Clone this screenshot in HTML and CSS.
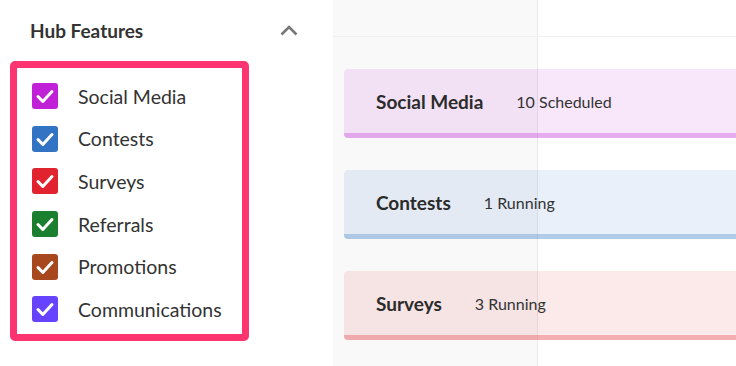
FILE: index.html
```html
<!DOCTYPE html>
<html lang="en">

<head>
    <meta charset="UTF-8">
    <meta name="viewport" content="width=device-width, initial-scale=1.0">
    <title>Hub Features</title>
    <link rel="stylesheet" href="styles.css">
</head>

<body>
    <aside class="sidebar">
        <div class="sidebar-head">
            <h2>Hub Features</h2>
            <svg class="chevron" width="18" height="11" viewBox="0 0 18 11">
                <polyline points="1.5,9.5 9,2 16.5,9.5" fill="none" stroke="#777" stroke-width="2.6" />
            </svg>
        </div>
        <div class="filter-box">
            <label class="filter-row">
                <span class="check social"><svg width="26" height="26" viewBox="0 0 26 26"><polyline points="6,13.5 10.8,18.5 20,8.5" /></svg></span>
                Social Media
            </label>
            <label class="filter-row">
                <span class="check contests"><svg width="26" height="26" viewBox="0 0 26 26"><polyline points="6,13.5 10.8,18.5 20,8.5" /></svg></span>
                Contests
            </label>
            <label class="filter-row">
                <span class="check surveys"><svg width="26" height="26" viewBox="0 0 26 26"><polyline points="6,13.5 10.8,18.5 20,8.5" /></svg></span>
                Surveys
            </label>
            <label class="filter-row">
                <span class="check referrals"><svg width="26" height="26" viewBox="0 0 26 26"><polyline points="6,13.5 10.8,18.5 20,8.5" /></svg></span>
                Referrals
            </label>
            <label class="filter-row">
                <span class="check promotions"><svg width="26" height="26" viewBox="0 0 26 26"><polyline points="6,13.5 10.8,18.5 20,8.5" /></svg></span>
                Promotions
            </label>
            <label class="filter-row">
                <span class="check communications"><svg width="26" height="26" viewBox="0 0 26 26"><polyline points="6,13.5 10.8,18.5 20,8.5" /></svg></span>
                Communications
            </label>
        </div>
    </aside>

    <main class="board">
        <div class="board-col"></div>
        <div class="board-head"></div>
        <div class="feature-list">
            <div class="feature-card social">
                <span class="feature-name">Social Media</span>
                <span class="feature-meta">10 Scheduled</span>
            </div>
            <div class="feature-card contests">
                <span class="feature-name">Contests</span>
                <span class="feature-meta">1 Running</span>
            </div>
            <div class="feature-card surveys">
                <span class="feature-name">Surveys</span>
                <span class="feature-meta">3 Running</span>
            </div>
        </div>
    </main>
</body>

</html>
```

FILE: styles.css
```css
body {
    margin: 0;
    display: flex;
    height: 366px;
    overflow: hidden;
    font-family: "Lato", "Noto Sans", sans-serif;
    color: #333;
    background-color: #fff;
}

.sidebar {
    width: 333px;
    flex-shrink: 0;
    background-color: #fff;
}

.sidebar-head {
    height: 60px;
    display: flex;
    align-items: center;
    justify-content: space-between;
    padding: 0 35px 0 30px;
    box-sizing: border-box;
}

.sidebar-head h2 {
    margin: 0;
    font-size: 19px;
    font-weight: 700;
    color: #333;
}

.chevron {
    display: block;
}

.filter-box {
    width: 239px;
    margin-left: 10px;
    margin-top: 1px;
    box-sizing: border-box;
    border: 7px solid #fe3470;
    border-radius: 5px;
    padding: 7px 15px 3px;
}

.filter-row {
    display: flex;
    align-items: center;
    gap: 20px;
    height: 42.6px;
    font-size: 19.5px;
    color: #333;
}

.check {
    width: 26px;
    height: 26px;
    border-radius: 3px;
    flex-shrink: 0;
}

.check svg {
    display: block;
}

.check polyline {
    fill: none;
    stroke: #fff;
    stroke-width: 3;
    stroke-linecap: round;
    stroke-linejoin: round;
}

.check.social {
    background-color: #c021d6;
}

.check.contests {
    background-color: #3373c4;
}

.check.surveys {
    background-color: #e0232e;
}

.check.referrals {
    background-color: #1a7f2e;
}

.check.promotions {
    background-color: #a8481f;
}

.check.communications {
    background-color: #6644ff;
}

/* grid behind the cards */
.board {
    flex: 1;
    display: grid;
    grid-template-columns: 205px 1fr;
    grid-template-rows: 37px 1fr;
    overflow: hidden;
}

.board-col {
    grid-column: 1;
    grid-row: 1 / -1;
    background-color: #f9f9f9;
    border-right: 1px solid #e9e9ec;
}

.board-head {
    grid-column: 1 / -1;
    grid-row: 1;
    border-bottom: 1px solid #efefef;
}

.feature-list {
    grid-column: 1 / -1;
    grid-row: 2;
    display: flex;
    flex-direction: column;
    gap: 32px;
    padding: 32px 0 0 11px;
}

.feature-card {
    width: 600px;
    height: 69px;
    box-sizing: border-box;
    display: flex;
    align-items: center;
    gap: 33px;
    padding: 0 32px;
    border-radius: 4px;
    border-bottom: 5px solid;
}

.feature-name {
    font-size: 19px;
    font-weight: 700;
    color: #2b2b2b;
}

.feature-meta {
    font-size: 16px;
    color: #333;
}

.feature-card.social {
    background-color: rgba(192, 33, 214, 0.11);
    border-color: rgba(192, 33, 214, 0.3);
}

.feature-card.contests {
    background-color: rgba(51, 115, 196, 0.11);
    border-color: rgba(51, 115, 196, 0.3);
}

.feature-card.surveys {
    background-color: rgba(224, 35, 46, 0.1);
    border-color: rgba(224, 35, 46, 0.3);
}
```
